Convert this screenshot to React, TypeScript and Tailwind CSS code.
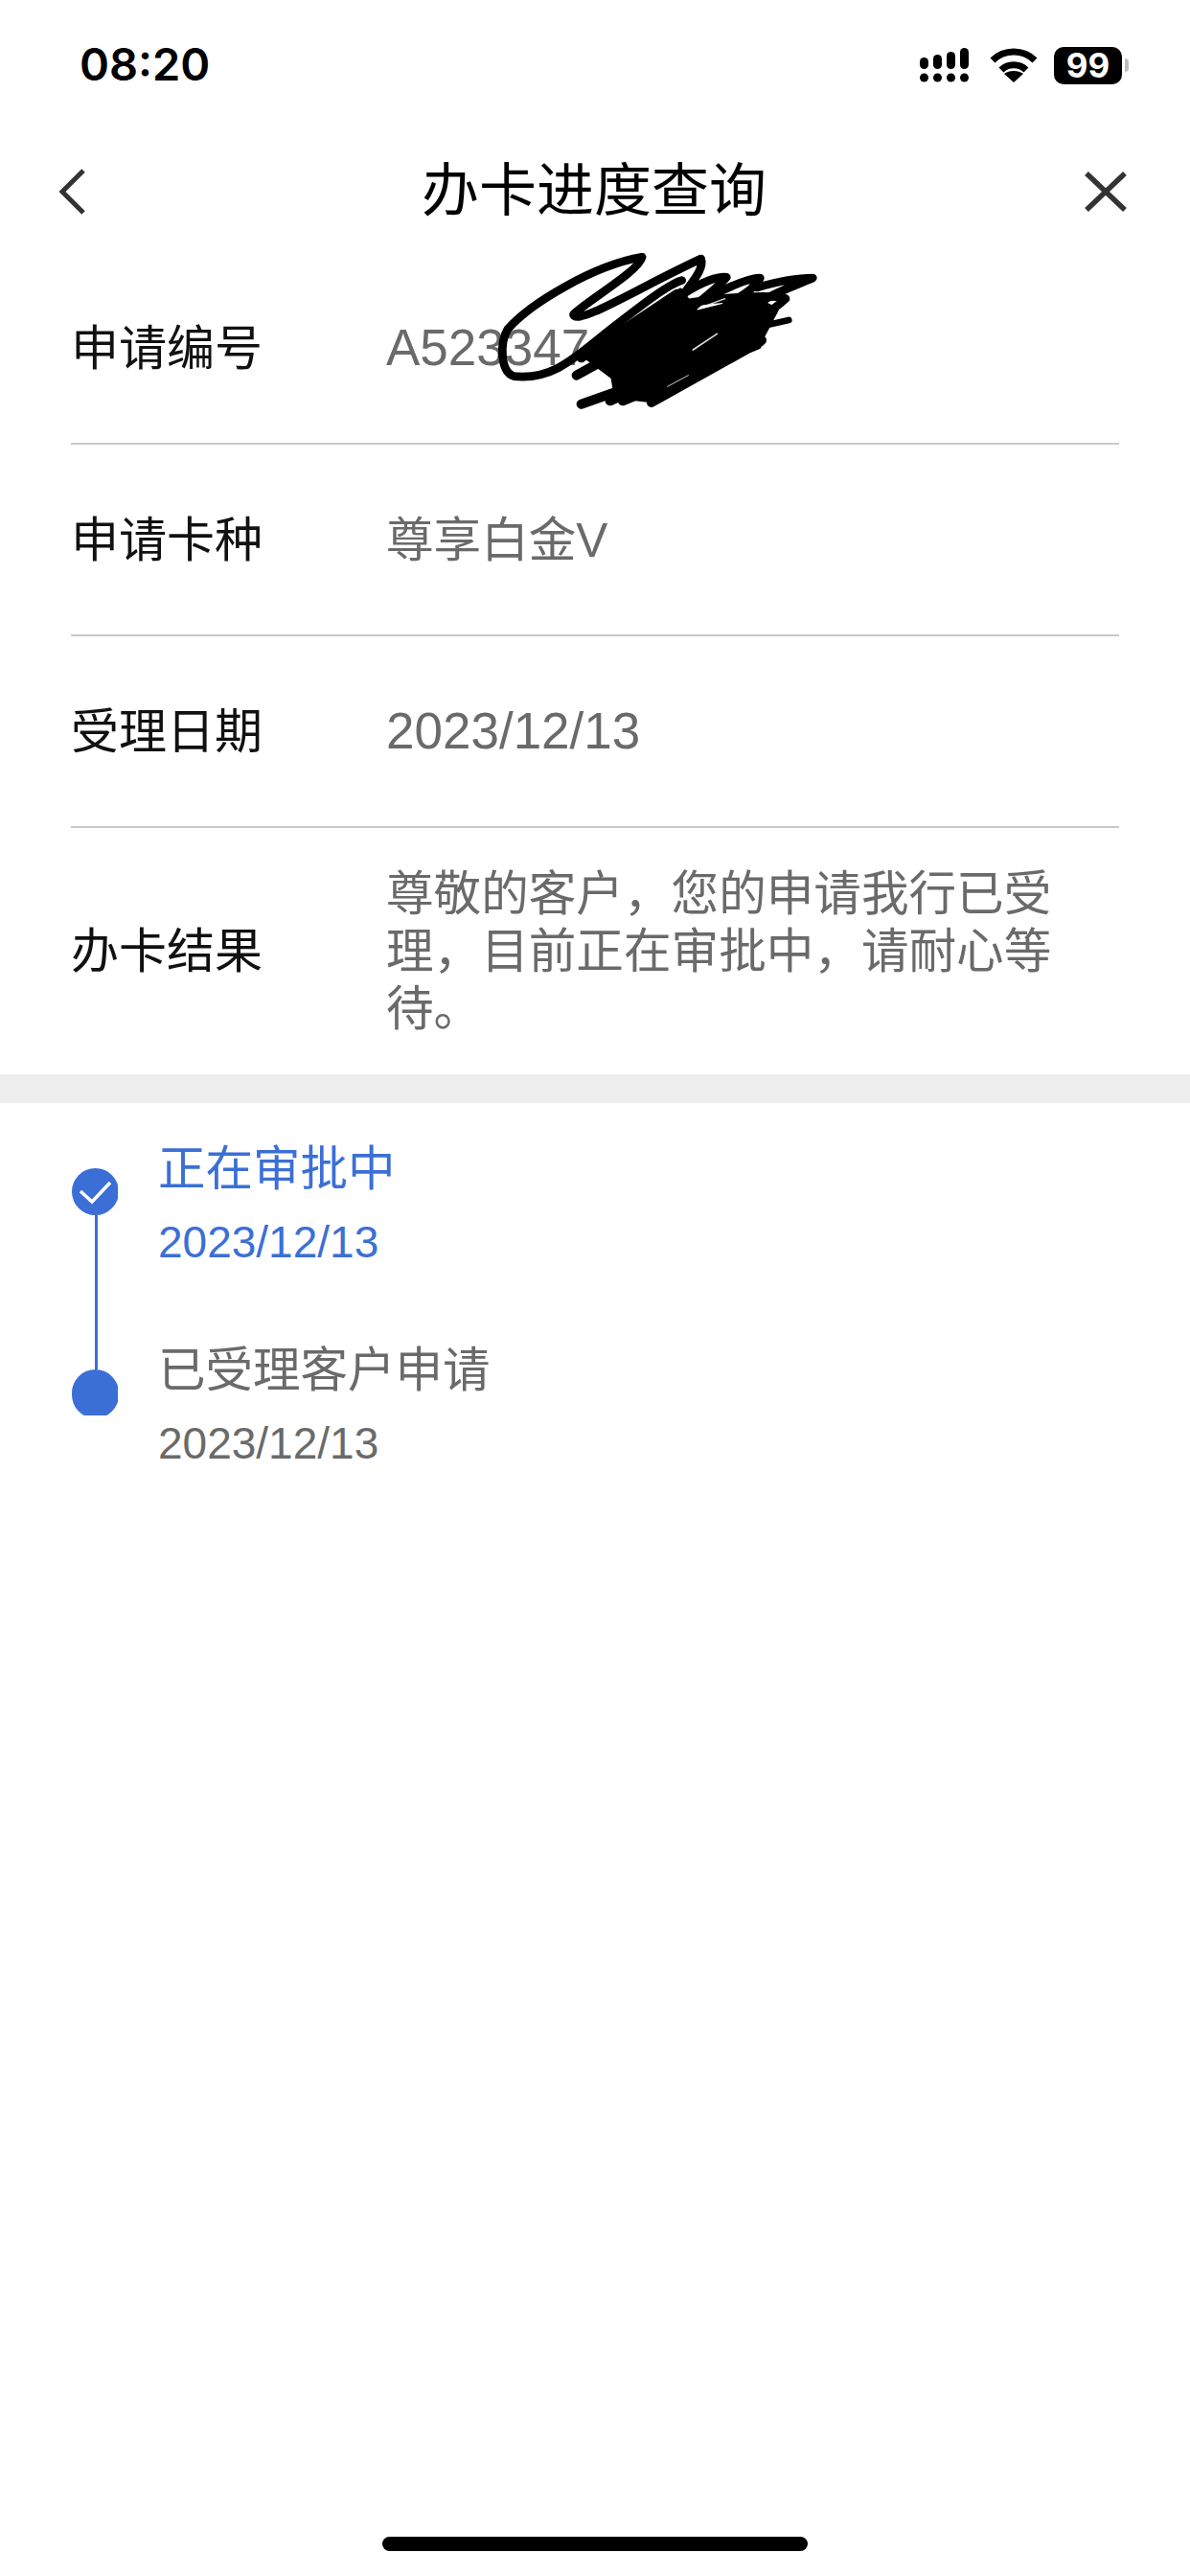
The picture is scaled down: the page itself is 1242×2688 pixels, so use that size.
// App.tsx
const FONT = "font-['Liberation_Sans','Noto_Sans_CJK_SC',sans-serif]";

const InfoRow = ({ label, children, tall }: { label: string; children: React.ReactNode; tall?: boolean }) => (
  <div className={`flex items-center ${tall ? 'h-[257px]' : 'h-[199px] border-b-2 border-[#c9c9c9]'}`}>
    <div className="w-[329px] shrink-0 text-[50px] leading-[60px] text-[#111]">{label}</div>
    <div className="w-[715px] text-[49.6px] leading-[60px] text-[#6a6a6a]">{children}</div>
  </div>
);

const SignalIcon = () => (
  <svg width="54" height="40" viewBox="0 0 54 40" fill="#000">
    <rect x="1" y="12" width="9" height="12" rx="4.5" />
    <rect x="15" y="9" width="9" height="15" rx="4.5" />
    <rect x="29" y="6" width="9" height="18" rx="4.5" />
    <rect x="43" y="2" width="9" height="22" rx="4.5" />
    <circle cx="5.5" cy="33" r="4.5" />
    <circle cx="19.5" cy="33" r="4.5" />
    <circle cx="33.5" cy="33" r="4.5" />
    <circle cx="47.5" cy="33" r="4.5" />
  </svg>
);

const WifiIcon = () => (
  <svg width="50" height="38" viewBox="0 0 50 38" fill="none" stroke="#000" strokeWidth="7">
    <path d="M3 14C15 2 35 2 47 14" />
    <path d="M12 24C19 17 31 17 38 24" />
    <path d="M25 37L15 28C20 24 30 24 35 28Z" fill="#000" stroke="none" />
  </svg>
);

// the pen scribble drawn over the application number
const Scribble = () => (
  <svg className="absolute left-[380px] top-[240px]" width="500" height="200" viewBox="0 0 1500 600" fill="none" stroke="#000" strokeWidth="26" strokeLinecap="round" strokeLinejoin="round">
    <path d="M870 85C720 110 520 230 450 310C425 350 425 445 470 458C590 470 660 400 760 320C850 250 950 170 995 158" />
    <path d="M870 85C860 130 700 220 655 265C670 300 860 180 1055 90C1065 120 1030 160 1005 195" />
    <path d="M1000 200C1060 160 1110 145 1135 148C1100 190 1050 220 1010 260" />
    <path d="M1100 200C1160 170 1210 150 1240 150C1220 190 1170 210 1130 240" />
    <path d="M1230 180C1300 160 1360 150 1405 150C1360 170 1300 190 1250 220" />
    <path d="M1250 300L1330 282" strokeWidth="20" />
    <path d="M1000 230C1130 210 1280 200 1320 215C1250 280 1180 300 1120 330" />
    <path d="M680 400L980 200M665 455L1000 270M680 545L1245 345M770 535L1200 340M810 535L1230 360M900 540L1240 350" strokeWidth="30" />
    <path d="M700 400L990 190L1040 260L1220 215L1290 250L1235 355L920 535L790 520L780 460Z" fill="#000" strokeWidth="16" />
    <path d="M1030 375L1105 325" stroke="#ddd" strokeWidth="5" />
    <path d="M1075 235L1130 215" stroke="#ddd" strokeWidth="4" />
    <path d="M950 490L1015 455" stroke="#ccc" strokeWidth="3" />
  </svg>
);

export default function App() {
  return (
    <div className={`relative flex h-[2688px] w-[1242px] flex-col overflow-hidden bg-white ${FONT}`}>
      {/* Status bar */}
      <div className="flex h-[135px] items-start justify-between pl-[83px] pr-[64px] pt-[39px]">
        <span className="font-['Inter',sans-serif] text-[47px] font-semibold leading-[56px] text-black">08:20</span>
        <div className="flex items-center pt-[9px]">
          <SignalIcon />
          <div className="ml-[20px]"><WifiIcon /></div>
          <div className="ml-[17px] flex items-center gap-[3px]">
            <div className="flex h-[39px] w-[71px] items-center justify-center rounded-[10px] bg-black font-['Inter',sans-serif] text-[35px] font-bold leading-none text-white">99</div>
            <div className="h-[14px] w-[4px] rounded-r-full bg-[#bdbdbd]" />
          </div>
        </div>
      </div>

      {/* Header */}
      <div className="flex h-[130px] items-center pl-[60px] pr-[66px]">
        <svg width="30" height="48" viewBox="0 0 30 48" fill="none" stroke="#333" strokeWidth="5">
          <path d="M27 2L5 24L27 46" />
        </svg>
        <div className="ml-[18px] flex-1 text-center text-[60px] leading-[70px] text-black">办卡进度查询</div>
        <svg width="44" height="44" viewBox="0 0 44 44" fill="none" stroke="#333" strokeWidth="5.5">
          <path d="M2 3L42 41M42 3L2 41" />
        </svg>
      </div>

      {/* Application details */}
      <div className="ml-[74px] w-[1094px]">
        <InfoRow label="申请编号"><span className="text-[53px]">A523347</span></InfoRow>
        <div className="h-[1px]" />
        <InfoRow label="申请卡种">尊享白金V</InfoRow>
        <div className="h-[1px]" />
        <InfoRow label="受理日期"><span className="text-[53px]">2023/12/13</span></InfoRow>
        <InfoRow label="办卡结果" tall>尊敬的客户，您的申请我行已受理，目前正在审批中，请耐心等待。</InfoRow>
      </div>

      <div className="h-[30px] bg-[#eeeeee]" />

      {/* Timeline */}
      <div className="flex pl-[75px] pt-[39px]">
        <div className="flex w-[90px] shrink-0 flex-col pt-[29px]">
          <div className="flex h-[49px] w-[48px] items-center overflow-hidden">
            <div className="relative h-[49px] w-[49px] shrink-0 rounded-full bg-[#3b6fd6]">
              <svg className="absolute left-0 top-0" width="49" height="49" viewBox="0 0 49 49" fill="none" stroke="#fff" strokeWidth="3.5">
                <path d="M9 24L21 35L40 15" />
              </svg>
            </div>
          </div>
          <div className="ml-[24px] h-[161px] w-[3px] bg-[#3b6fd6]" />
          <div className="h-[48px] w-[48px] overflow-hidden">
            <div className="h-[51px] w-[49px] rounded-full bg-[#3b6fd6]" />
          </div>
        </div>
        <div className="flex flex-col">
          <div className="h-[210px]">
            <div className="text-[49.5px] leading-[60px] text-[#3b6fd6]">正在审批中</div>
            <div className="mt-[16px] text-[46px] leading-[60px] text-[#3b6fd6]">2023/12/13</div>
          </div>
          <div>
            <div className="text-[49.5px] leading-[60px] text-[#6a6a6a]">已受理客户申请</div>
            <div className="mt-[16px] text-[46px] leading-[60px] text-[#6a6a6a]">2023/12/13</div>
          </div>
        </div>
      </div>

      {/* Home indicator */}
      <div className="mt-auto mb-[26px] ml-[399px] h-[15px] w-[444px] rounded-full bg-black" />

      <Scribble />
    </div>
  );
}
